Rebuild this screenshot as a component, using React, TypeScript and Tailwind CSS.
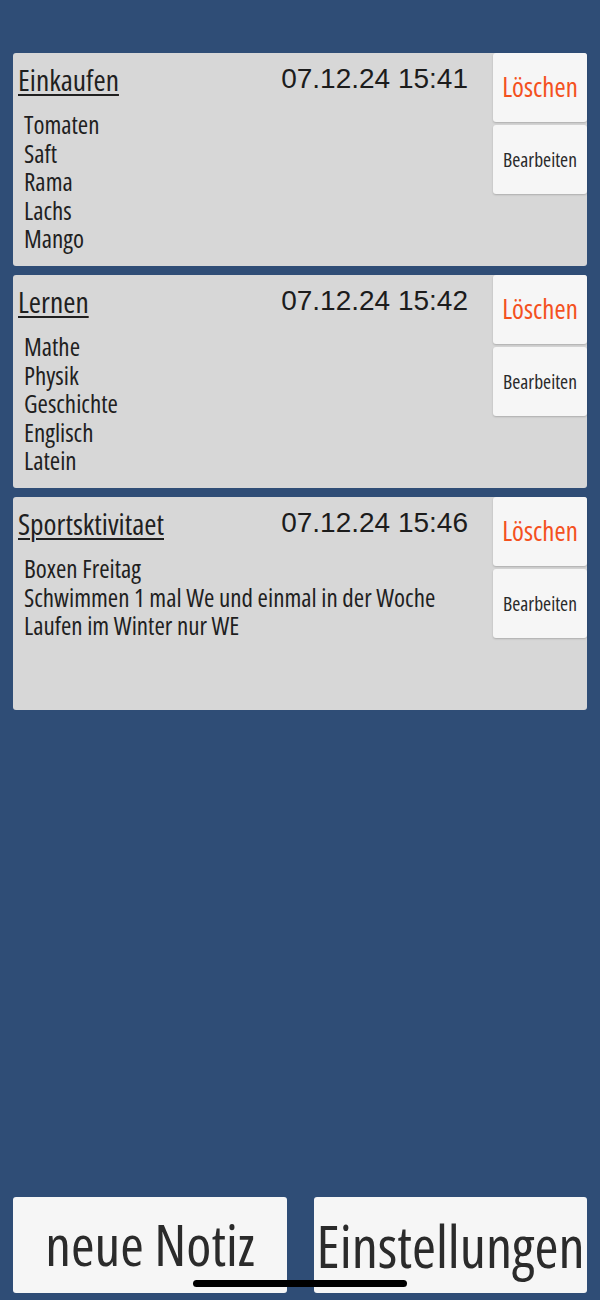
import React from "react";

type Note = {
  title: string;
  date: string;
  lines: string[];
};

const notes: Note[] = [
  { title: "Einkaufen", date: "07.12.24 15:41", lines: ["Tomaten", "Saft", "Rama", "Lachs", "Mango"] },
  { title: "Lernen", date: "07.12.24 15:42", lines: ["Mathe", "Physik", "Geschichte", "Englisch", "Latein"] },
  {
    title: "Sportsktivitaet",
    date: "07.12.24 15:46",
    lines: ["Boxen Freitag", "Schwimmen 1 mal We und einmal in der Woche", "Laufen im Winter nur WE"],
  },
];

// condensed face via Open Sans' width axis
const narrow = "font-['Open_Sans',sans-serif] font-stretch-condensed font-medium";

function NoteCard({ note }: { note: Note }) {
  return (
    <div className="flex h-[213px] rounded-[3px] bg-[#d7d7d7]">
      <div className="flex-1 pl-[5px] pt-[9px]">
        <div className="flex items-start justify-between pr-[25px]">
          <h3 className={`${narrow} text-[29.5px] leading-[36px] text-[#1f1f1f] underline decoration-[1.5px] underline-offset-[3px]`}>
            {note.title}
          </h3>
          <span className="pt-[1px] font-['Liberation_Sans',Arial,sans-serif] text-[28px] leading-[32px] text-[#1c1c1c]">
            {note.date}
          </span>
        </div>
        <div className={`${narrow} mt-[12px] pl-[6px] text-[25px] leading-[28.6px] text-[#1f1f1f]`}>
          {note.lines.map((l) => (
            <div key={l}>{l}</div>
          ))}
        </div>
      </div>
      <div className="flex w-[94px] flex-col gap-[3px]">
        <button className={`${narrow} h-[69px] rounded-[3px] bg-[#f6f6f6] text-[27px] text-[#f4511e] shadow-[0_1px_2px_rgba(0,0,0,0.2)]`}>
          Löschen
        </button>
        <button className={`${narrow} h-[69px] rounded-[3px] bg-[#f6f6f6] text-[19.5px] text-[#2a2a2a] shadow-[0_1px_2px_rgba(0,0,0,0.2)]`}>
          Bearbeiten
        </button>
      </div>
    </div>
  );
}

export default function App() {
  return (
    <div className="relative flex h-[1300px] w-[600px] flex-col bg-[#2f4d76] px-[13px] pt-[53px] pb-[7px]">
      {/* Notes list */}
      <div className="flex flex-col gap-[9px]">
        {notes.map((n) => (
          <NoteCard key={n.title} note={n} />
        ))}
      </div>

      {/* Bottom actions */}
      <div className="mt-auto flex justify-between">
        <button className={`${narrow} h-[96px] w-[274px] rounded-[3px] bg-[#f6f6f6] text-[57px] text-[#2b2b2b]`}>
          neue Notiz
        </button>
        <button className={`${narrow} h-[96px] w-[273px] whitespace-nowrap rounded-[3px] bg-[#f6f6f6] text-[58px] text-[#2b2b2b]`}>
          Einstellungen
        </button>
      </div>

      {/* home indicator */}
      <div className="absolute bottom-[13px] left-[193px] h-[7px] w-[214px] rounded-full bg-black" />
    </div>
  );
}
